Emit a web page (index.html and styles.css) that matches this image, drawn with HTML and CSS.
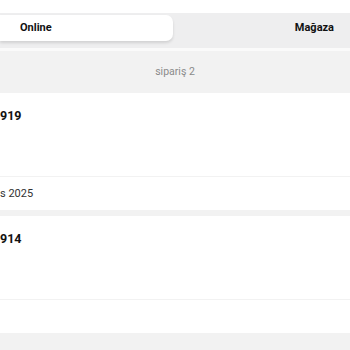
FILE: index.html
```html
<!DOCTYPE html>
<html lang="tr">
<head>
    <meta charset="UTF-8">
    <title>Siparişler</title>
    <link rel="stylesheet" href="styles.css">
</head>
<body>
<div class="tabs">
    <div class="tab active">Online</div>
    <div class="tab">Mağaza</div>
</div>
<div class="count">sipariş 2</div>
<div class="order">
    <div class="order-head">919</div>
    <div class="order-date">s 2025</div>
</div>
<div class="order">
    <div class="order-head">914</div>
    <div class="order-date"></div>
</div>
</body>
</html>
```
FILE: styles.css
```css
body {
    margin: 0;
    background: #f2f2f2;
    font-family: Roboto, "Noto Sans", sans-serif;
    color: #111;
}

.tabs {
    display: flex;
    margin-top: 13px;
    padding: 2px 0 7px;
    background: #eeeeef;
    box-shadow: 0 -13px 0 #fff;
}

.tab {
    height: 26px;
    line-height: 26px;
    font-size: 11px;
    font-weight: 700;
}

.tab.active {
    width: 153px;
    padding-left: 20px;
    background: #fff;
    border-radius: 0 7px 7px 0;
    box-shadow: 0 2px 3px rgba(0, 0, 0, 0.12);
}

.tab:last-child {
    flex: 1;
    text-align: right;
    padding-right: 16px;
}

.count {
    height: 41px;
    line-height: 41px;
    margin-bottom: 1px;
    text-align: center;
    font-size: 10.5px;
    color: #8a8a8a;
    border-top: 3px solid #fafafa;
}

.order {
    background: #fff;
    margin-bottom: 6px;
}

.order-head {
    height: 84px;
    padding-top: 15px;
    box-sizing: border-box;
    font-size: 12.5px;
    font-weight: 700;
    border-bottom: 1px solid #f2f2f2;
}

.order-date {
    height: 33px;
    line-height: 33px;
    font-size: 11px;
    color: #333;
}
```
